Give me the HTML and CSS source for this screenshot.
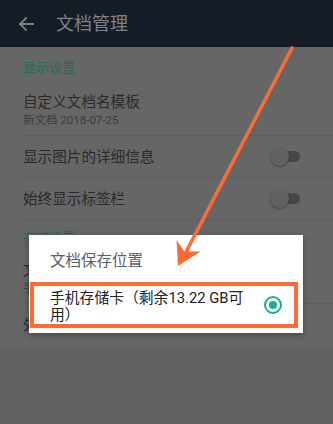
FILE: index.html
```html
<!DOCTYPE html>
<html lang="zh">
<head>
<meta charset="utf-8">
<link rel="stylesheet" href="styles.css">
</head>
<body>
<div class="page">
  <header class="topbar">
    <svg class="back" width="16" height="16" viewBox="0 0 16 16"><path d="M15 8H2M8 2L2 8l6 6" fill="none" stroke="#7d8289" stroke-width="1.8" stroke-linecap="square"/></svg>
    <span class="title">文档管理</span>
  </header>
  <main class="list">
    <div class="section first">显示设置</div>
    <div class="item tall">
      <div class="label">自定义文档名模板</div>
      <div class="sub">新文档 2018-07-25</div>
    </div>
    <div class="item row">
      <div class="label">显示图片的详细信息</div>
      <span class="toggle"><span class="thumb"></span></span>
    </div>
    <div class="item row">
      <div class="label">始终显示标签栏</div>
      <span class="toggle"><span class="thumb"></span></span>
    </div>
    <div class="section">存储设置</div>
    <div class="item tall second">
      <div class="label">文档保存位置</div>
      <div class="sub">手机存储卡</div>
    </div>
    <div class="item row last">
      <div class="label">外部存储</div>
    </div>
  </main>
  <div class="dialog">
    <div class="dtitle">文档保存位置</div>
    <div class="option">
      <span class="otext">手机存储卡（剩余13.22 GB可用）</span>
      <span class="radio"><span class="dot"></span></span>
    </div>
  </div>
  <svg class="pointer" width="333" height="424" viewBox="0 0 333 424">
    <line x1="292" y1="48" x2="185" y2="254" stroke="#ff6a35" stroke-width="3.6" stroke-linecap="round"/>
    <polygon points="178,266 176.5,240 184.5,251.5 200.5,251.5" fill="#ff6a35"/>
  </svg>
</div>
</body>
</html>
```
FILE: styles.css
```css
html, body {
  margin: 0;
  padding: 0;
}
body {
  width: 333px;
  height: 424px;
  overflow: hidden;
  background: #5f6060;
  font-family: "Roboto", "Noto Sans CJK SC", "Noto Sans", sans-serif;
}
.page {
  position: relative;
  width: 333px;
  height: 424px;
}
.topbar {
  height: 47px;
  background: #161c26;
  display: flex;
  align-items: center;
  padding-left: 18px;
  box-sizing: border-box;
}
.back {
  display: block;
  margin-right: 22px;
}
.title {
  color: #7f838a;
  font-size: 18px;
  line-height: 24px;
}
.list {
  background: #666666;
  height: 302px;
  overflow: hidden;
}
.section {
  color: #286c53;
  font-size: 13px;
  line-height: 16px;
  padding: 10px 0 4px 23px;
}
.section.first {
  padding-top: 13px;
}
.item {
  margin-left: 23px;
  border-bottom: 1px solid #5d5d5d;
  box-sizing: border-box;
}
.item.tall {
  height: 56px;
  padding-top: 12px;
}
.item.second {
  height: 54px;
  padding-top: 10px;
}
.item.row {
  height: 42px;
  display: flex;
  align-items: center;
  justify-content: space-between;
  padding-right: 33px;
}
.item.last {
  border-bottom: none;
}
.label {
  color: #2a2a2a;
  font-size: 14.6px;
  line-height: 20px;
}
.sub {
  color: #3c3c3c;
  font-size: 11.5px;
  line-height: 16px;
}
.toggle {
  position: relative;
  width: 30px;
  height: 11px;
}
.toggle::before {
  content: "";
  position: absolute;
  left: 9px;
  top: 0;
  width: 21px;
  height: 11px;
  border-radius: 6px;
  background: #474747;
}
.thumb {
  position: absolute;
  left: 0;
  top: -4px;
  width: 19px;
  height: 19px;
  border-radius: 50%;
  background: #616161;
  box-shadow: 0 1px 2px rgba(0,0,0,0.35);
}
.dialog {
  position: absolute;
  left: 29px;
  top: 235px;
  width: 274px;
  height: 98px;
  background: #ffffff;
  box-shadow: 0 2px 6px rgba(0,0,0,0.35);
  box-sizing: border-box;
  padding-top: 16px;
}
.dtitle {
  color: #56606a;
  font-size: 15.5px;
  line-height: 20px;
  padding-left: 21px;
  height: 31px;
}
.option {
  margin-left: 1px;
  width: 268px;
  height: 46px;
  border: 4px solid #ff6a35;
  box-sizing: border-box;
  display: flex;
  align-items: center;
  padding-left: 16px;
}
.otext {
  width: 202px;
  color: #222222;
  font-size: 14.8px;
  line-height: 17px;
  padding-top: 4px;
}
.radio {
  margin-left: 12px;
  width: 18px;
  height: 18px;
  border: 2px solid #16b08f;
  border-radius: 50%;
  box-sizing: border-box;
  display: flex;
  align-items: center;
  justify-content: center;
}
.dot {
  width: 8px;
  height: 8px;
  border-radius: 50%;
  background: #16b08f;
}
.pointer {
  position: absolute;
  left: 0;
  top: 0;
  pointer-events: none;
}
```
